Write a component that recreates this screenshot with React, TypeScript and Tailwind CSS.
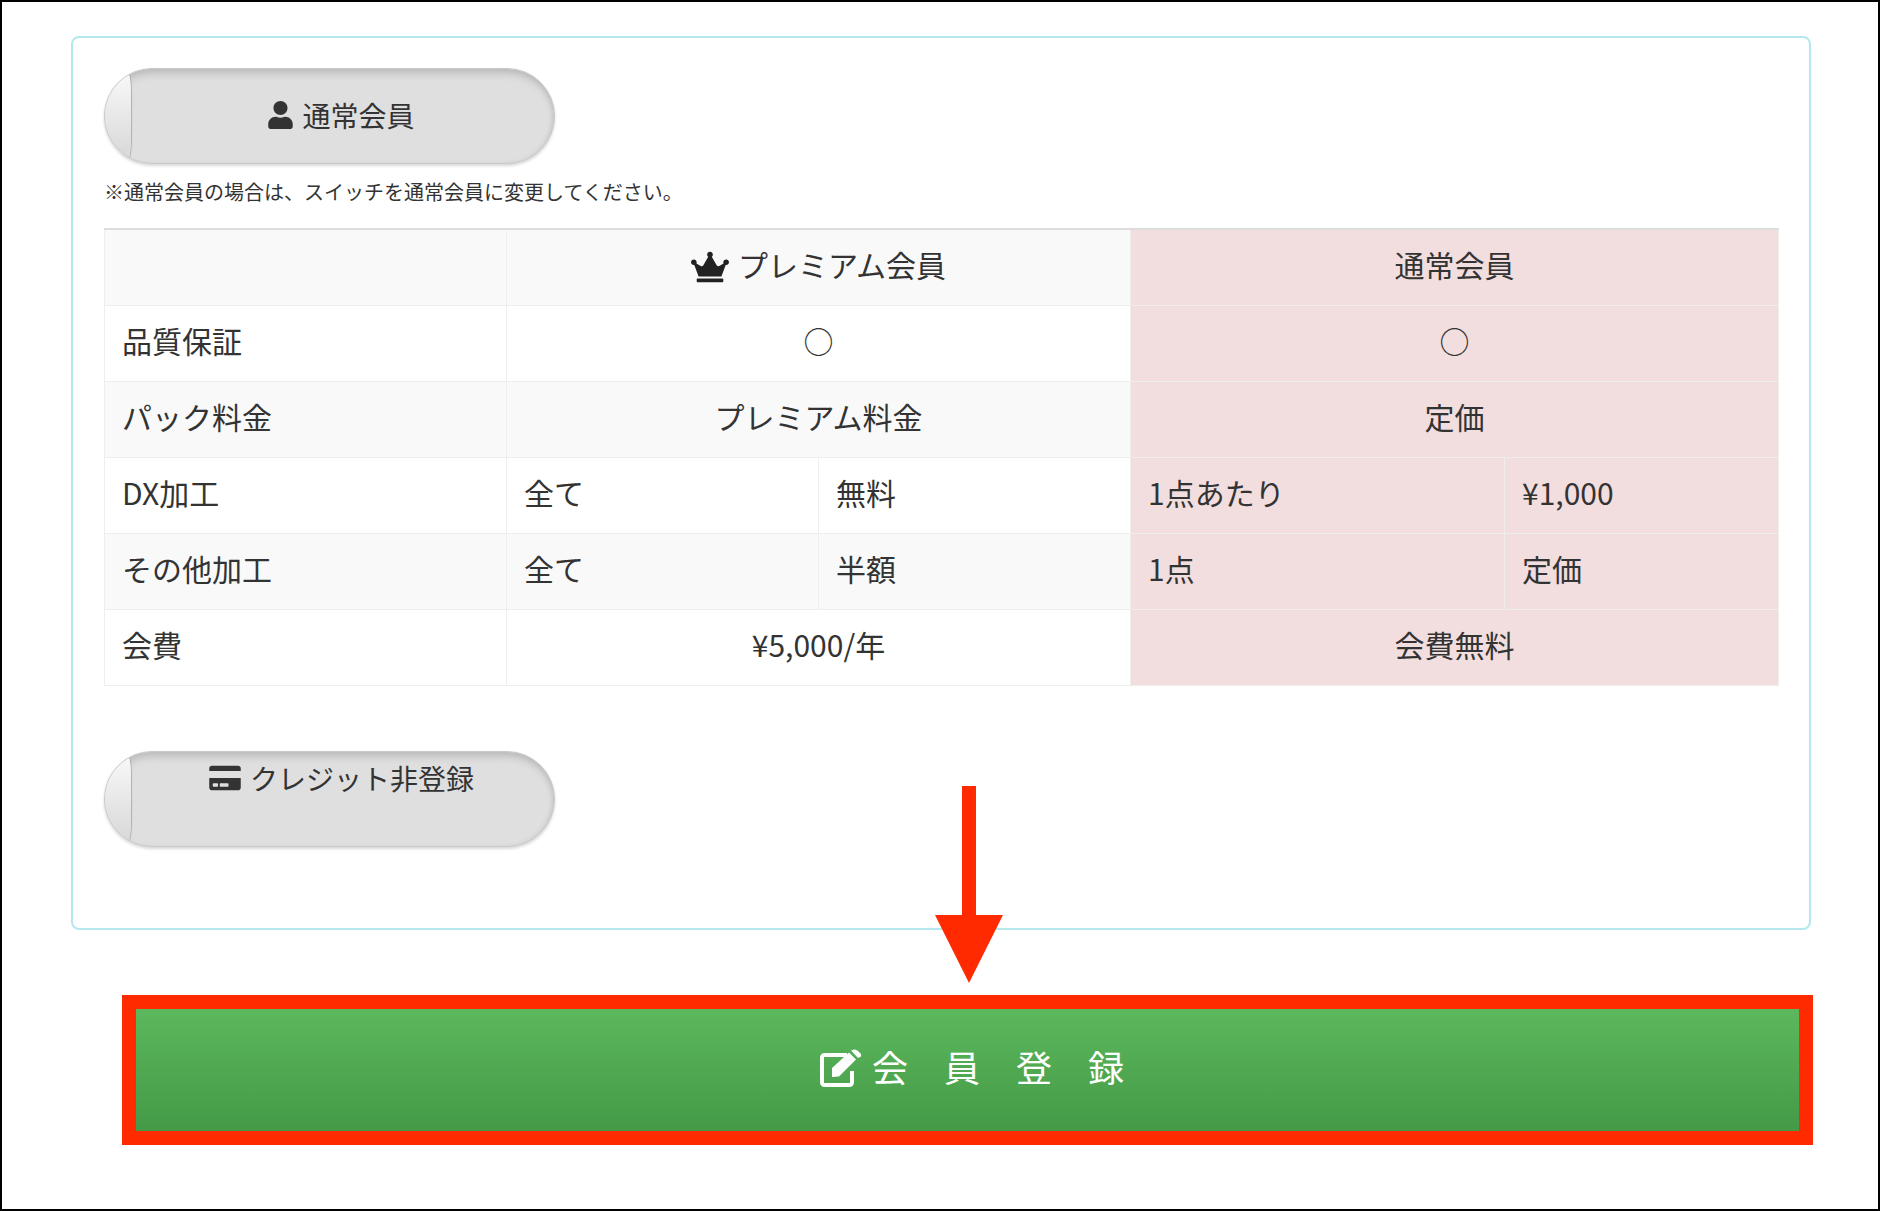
import { FaCreditCard, FaCrown, FaUser } from 'react-icons/fa';
import type { ReactNode } from 'react';

const jp = "font-['Noto_Sans_CJK_JP','Liberation_Sans',sans-serif]";
const cell = 'border border-[#eeeeea] px-[17px] pb-[6px] h-[76px] font-normal';
const center = 'text-center';
const pink = 'bg-[#f2dede]';

function Switch({ children, alignTop }: { children: ReactNode; alignTop?: boolean }) {
  return (
    <div className="relative w-[451px] h-[96px] rounded-[48px] bg-[#dfdfdf] border border-[#c9c9c9] shadow-[inset_0_8px_8px_-4px_#b8b8b8,inset_-3px_0_5px_-2px_#c4c4c4,0_2px_3px_#d8d8d8] overflow-hidden">
      {/* knob on the left */}
      <div className="absolute left-0 top-0 h-full w-[26px] rounded-[40px_10px_10px_40px/48px_48px_48px_48px] bg-gradient-to-b from-[#fafafa] to-[#d6d6d6] shadow-[1px_0_1px_#aeaeae]" />
      <div className={`flex justify-center items-center gap-[9px] pl-[24px] text-[28px] text-[#333] ${alignTop ? 'pt-[5px]' : 'h-full pb-[3px]'}`}>
        {children}
      </div>
    </div>
  );
}

export default function App() {
  return (
    <div className={`relative w-[1880px] h-[1211px] bg-white border-2 border-black overflow-hidden text-[#333] ${jp}`}>
      <div className="ml-[69px] mt-[34px] w-[1740px] h-[894px] border-2 border-[#b5e8ee] rounded-lg pl-[31px] pr-[29px] pt-[30px]">
        <Switch>
          <FaUser className="w-[25px] h-[28px] text-[#333]" />
          <span>通常会員</span>
        </Switch>

        <p className="mt-[15px] text-[20px] leading-[26px] text-[#333]">※通常会員の場合は、スイッチを通常会員に変更してください。</p>

        <table className="mt-[23px] w-[1674px] table-fixed border-collapse text-[30px] text-[#333] border-t-2 border-t-[#dddddd]">
          <colgroup>
            <col className="w-[402px]" />
            <col className="w-[312px]" />
            <col className="w-[312px]" />
            <col className="w-[374px]" />
            <col className="w-[274px]" />
          </colgroup>
          <tbody>
            <tr className="bg-[#f9f9f9]">
              <td className={cell}></td>
              <td colSpan={2} className={`${cell} ${center}`}>
                <FaCrown className="inline-block align-[-6px] w-[38px] h-[32px] mr-[9px] text-[#222]" />
                プレミアム会員
              </td>
              <td colSpan={2} className={`${cell} ${center} ${pink}`}>通常会員</td>
            </tr>
            <tr>
              <td className={cell}>品質保証</td>
              <td colSpan={2} className={`${cell} ${center}`}>○</td>
              <td colSpan={2} className={`${cell} ${center} ${pink}`}>○</td>
            </tr>
            <tr className="bg-[#f9f9f9]">
              <td className={cell}>パック料金</td>
              <td colSpan={2} className={`${cell} ${center}`}>プレミアム料金</td>
              <td colSpan={2} className={`${cell} ${center} ${pink}`}>定価</td>
            </tr>
            <tr>
              <td className={cell}>DX加工</td>
              <td className={cell}>全て</td>
              <td className={cell}>無料</td>
              <td className={`${cell} ${pink}`}>1点あたり</td>
              <td className={`${cell} ${pink}`}>¥1,000</td>
            </tr>
            <tr className="bg-[#f9f9f9]">
              <td className={cell}>その他加工</td>
              <td className={cell}>全て</td>
              <td className={cell}>半額</td>
              <td className={`${cell} ${pink}`}>1点</td>
              <td className={`${cell} ${pink}`}>定価</td>
            </tr>
            <tr>
              <td className={cell}>会費</td>
              <td colSpan={2} className={`${cell} ${center}`}>¥5,000/年</td>
              <td colSpan={2} className={`${cell} ${center} ${pink}`}>会費無料</td>
            </tr>
          </tbody>
        </table>

        <div className="mt-[65px]">
          <Switch alignTop>
            <FaCreditCard className="w-[32px] h-[28px] text-[#333]" />
            <span>クレジット非登録</span>
          </Switch>
        </div>
      </div>

      <div className="ml-[120px] mt-[65px] w-[1691px] h-[150px] border-[14px] border-[#ff2a00] bg-gradient-to-b from-[#5cb85c] to-[#449a47] flex items-center justify-center text-white text-[36px] pl-[9px] pb-[5px]">
        {/* edit icon: thick square outline with a solid pencil */}
        <svg className="mr-[10px]" width="42" height="38" viewBox="0 0 42 38" fill="none">
          <path d="M27 6H4.500A2.500 2.500 0 0 0 2 8.500V33.500A2.500 2.500 0 0 0 4.500 36H29.500A2.500 2.500 0 0 0 32 33.500V22" stroke="white" strokeWidth="4" />
          <path d="M12 19L29 3.500L36 10.500L19 27.500L12 28Z" fill="white" />
          <path d="M31 1.500L34 0.500Q36 0 38 2L40.500 4.500Q41.500 6 41 7.500L38 9Z" fill="white" />
        </svg>
        <span className="tracking-[36px] mr-[-36px] mb-[4px]">会員登録</span>
      </div>

      {/* red arrow laid over the panel */}
      <svg className="absolute left-[931px] top-[784px]" width="72" height="200" viewBox="0 0 72 200">
        <rect x="29" y="0" width="14" height="129" fill="#ff2a00" />
        <polygon points="2,129 70,129 36,197" fill="#ff2a00" />
      </svg>
    </div>
  );
}
